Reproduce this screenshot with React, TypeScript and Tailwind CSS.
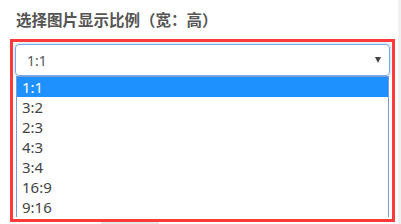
import React from 'react';

const ratios = ['1:1', '3:2', '2:3', '4:3', '3:4', '16:9', '9:16'];

export default function App() {
  const selected = '1:1';

  return (
    <div
      className="relative w-[401px] h-[224px] overflow-hidden bg-white"
      style={{ fontFamily: '"Noto Sans", "Noto Sans CJK SC", sans-serif' }}
    >
      <div className="pl-[16px] pt-[8px] h-[39px] text-[15.5px] font-bold leading-[24px] text-[#555]">
        选择图片显示比例（宽：高）
      </div>

      <div className="ml-[10px] w-[385px] h-[183px] border-[3px] border-[#ff3a3a] p-[2px] flex flex-col overflow-hidden">
        <div className="h-[32px] shrink-0 flex items-center justify-between rounded-[4px] border border-[#79aae6] pl-[11px] pr-[8px] shadow-[0_0_4px_rgba(102,175,233,0.6)] text-[14px] text-[#555]">
          <span>{selected}</span>
          <span className="w-0 h-0 border-l-[3.5px] border-r-[3.5px] border-t-[6px] border-l-transparent border-r-transparent border-t-[#444]" />
        </div>
        <div className="mx-[1px] flex-1 border-x border-t border-[#7a9cd3] overflow-hidden">
          {ratios.map((r) => (
            <div
              key={r}
              className={
                r === selected
                  ? 'h-[20px] px-[5px] text-[15px] leading-[20px] bg-[#1e90ff] text-white'
                  : 'h-[20px] px-[5px] text-[15px] leading-[20px] text-[#444]'
              }
            >
              {r}
            </div>
          ))}
        </div>
      </div>

      <div className="absolute right-0 top-0 h-full w-[3px] bg-[#f0f0f0]" />
      <div className="absolute left-[101px] top-[222px] w-[58px] h-[2px] bg-[#e6e6e6]" />
    </div>
  );
}
